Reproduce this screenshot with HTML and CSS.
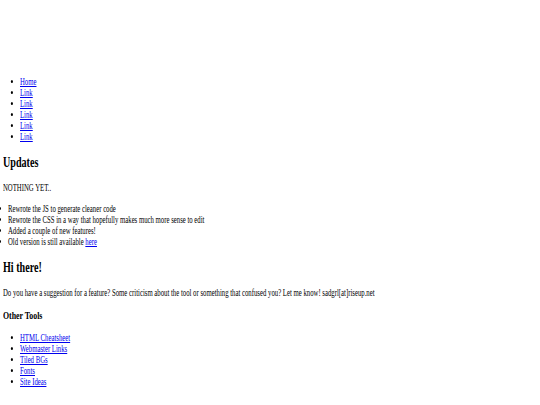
FILE: index.html
```html
<!DOCTYPE html>
<html lang="en">
<head>
<meta charset="utf-8">
<title>Updates</title>
<link rel="stylesheet" href="styles.css">
</head>
<body>
<div class="page">
  <div class="header"></div>
  <ul class="nav">
    <li><a href="#">Home</a></li>
    <li><a href="#">Link</a></li>
    <li><a href="#">Link</a></li>
    <li><a href="#">Link</a></li>
    <li><a href="#">Link</a></li>
    <li><a href="#">Link</a></li>
  </ul>
  <h2>Updates</h2>
  <p>NOTHING YET..</p>
  <ul class="updates">
    <li>Rewrote the JS to generate cleaner code</li>
    <li>Rewrote the CSS in a way that hopefully makes much more sense to edit</li>
    <li>Added a couple of new features!</li>
    <li>Old version is still available <a href="#">here</a></li>
  </ul>
  <h2>Hi there!</h2>
  <p>Do you have a suggestion for a feature? Some criticism about the tool or something that confused you? Let me know! sadgrl[at]riseup.net</p>
  <h3>Other Tools</h3>
  <ul class="tools">
    <li><a href="#">HTML Cheatsheet</a></li>
    <li><a href="#">Webmaster Links</a></li>
    <li><a href="#">Tiled BGs</a></li>
    <li><a href="#">Fonts</a></li>
    <li><a href="#">Site Ideas</a></li>
  </ul>
</div>
</body>
</html>
```
FILE: styles.css
```css
html, body {
  margin: 0;
  padding: 0;
  background: #ffffff;
}

.page {
  padding: 4.8px 3.4px;
  font-family: "Liberation Serif", "Times New Roman", serif;
  font-size: 9.6px;
  line-height: 11px;
  color: #000000;
}

.header {
  height: 61.6px;
}

.page a {
  color: #0000ee;
  text-decoration: underline;
}

/* text is drawn narrow: horizontal scale relative to vertical */
.page li,
.page p,
.page h2,
.page h3 {
  transform: scaleX(0.703);
  transform-origin: 0 50%;
}

.page h2 {
  font-size: 14.4px;
  line-height: 16.5px;
  font-weight: bold;
  margin: 11.9px 0;
}

.page h3 {
  font-size: 11.2px;
  line-height: 12.9px;
  font-weight: bold;
  margin: 10.5px 0;
}

.page p {
  margin: 9.6px 0;
}

.nav,
.tools {
  margin: 9.6px 0;
  padding-left: 16.9px;
}

.updates {
  margin: 9.6px 0;
  padding-left: 5.1px;
}
```
